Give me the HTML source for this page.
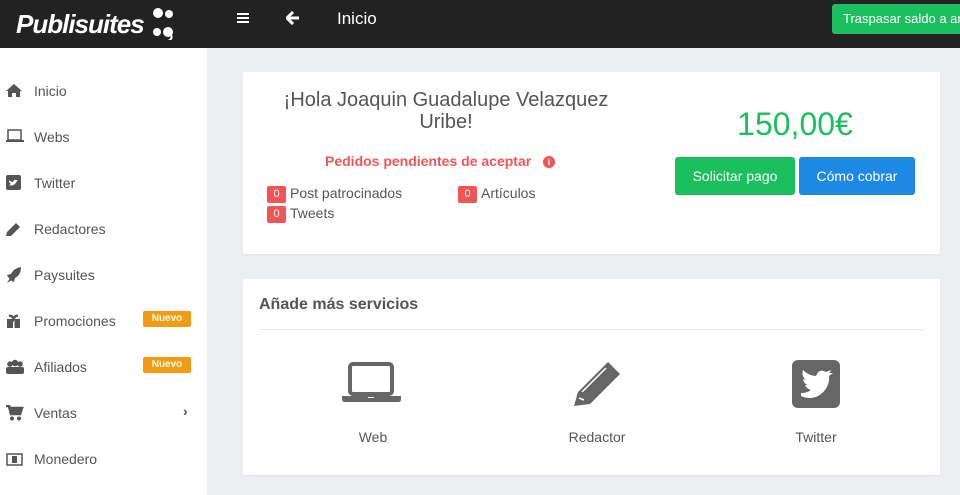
<!DOCTYPE html>
<html><head><meta charset="utf-8"><style>
*{margin:0;padding:0;box-sizing:border-box}
body{width:960px;height:495px;overflow:hidden;background:#eceef2;font-family:"Liberation Sans",Arial,sans-serif;position:relative;color:#555}
.top{position:absolute;left:0;top:0;width:960px;height:48px;background:#222}
.logo{position:absolute;left:16px;top:9px;color:#fff;font:italic bold 26px "Liberation Sans",sans-serif;letter-spacing:-1px}
.side{position:absolute;left:0;top:48px;width:207px;height:447px;background:#fff}
.item{position:absolute;left:0;height:20px;width:207px;font-size:14px;color:#555}
.item svg{position:absolute;left:6px;top:2px}
.item span{position:absolute;left:34px;top:2px}
.nuevo{position:absolute;left:143px;top:0;width:48px;height:16px;background:#f39c12;color:#fff;font-size:10px;font-weight:bold;text-align:center;line-height:16px;border-radius:2px}
.card{position:absolute;background:#fff;box-shadow:0 1px 2px rgba(0,0,0,.06)}
.badge{display:inline-block;width:19px;height:17px;background:#f05656;color:#fff;font-size:11px;text-align:center;line-height:17px;border-radius:2px;margin-right:4px;vertical-align:middle}
.btn{position:absolute;top:157px;height:38px;color:#fff;font-size:14px;text-align:center;line-height:38px;border-radius:3px}
</style></head><body>
<div class="top">
<div class="logo">Publisuites</div>
<svg style="position:absolute;left:148px;top:6px" width="32" height="34" viewBox="0 0 32 34"><circle cx="10" cy="7" r="5" fill="#fff"/><circle cx="21" cy="8" r="4" fill="#fff"/><circle cx="9" cy="26" r="4" fill="#fff"/><circle cx="20" cy="26" r="5" fill="#fff"/><path d="M23 29q2 4-3 6" stroke="#fff" stroke-width="2" fill="none"/></svg>
<div style="position:absolute;left:237px;top:13px;width:12px;height:2px;background:#fff;box-shadow:0 4px 0 #fff,0 8px 0 #fff"></div>
<svg style="position:absolute;left:286px;top:11px" width="14" height="14" viewBox="0 0 14 14"><path d="M7 1L1 7l6 6M1 7h12" stroke="#fff" stroke-width="3" fill="none"/></svg>
<div style="position:absolute;left:337px;top:9px;color:#fff;font-size:17px">Inicio</div>
<div style="position:absolute;left:832px;top:4px;width:128px;height:30px;background:#1cbf5e;color:#fff;font-size:13px;line-height:30px;padding-left:11px;border-radius:3px 0 0 3px;white-space:nowrap;overflow:hidden">Traspasar saldo a anunciante</div>
</div>
<div class="side">
<div class="item" style="top:33px"><svg width="16" height="14"><path d="M8 1L0 8h2v6h4V10h4v4h4V8h2z" fill="#555"/></svg><span>Inicio</span></div>
<div class="item" style="top:79px"><svg width="18" height="14"><rect x="2" y="1" width="13" height="10" fill="none" stroke="#555" stroke-width="1.5"/><rect x="0" y="11" width="18" height="2" fill="#555"/></svg><span>Webs</span></div>
<div class="item" style="top:125px"><svg width="16" height="16"><rect x="0" y="0" width="15" height="15" rx="2" fill="#555"/><path d="M3 10q5 2 8-4l1-1-2 0q-2-1-3 2q-2 0-4-2q0 3 2 4z" fill="#fff"/></svg><span>Twitter</span></div>
<div class="item" style="top:171px"><svg width="16" height="16"><path d="M0 15l1-4 9-9 4 4-9 9z" fill="#555"/></svg><span>Redactores</span></div>
<div class="item" style="top:217px"><svg width="16" height="16"><path d="M15 0Q8 1 5 7L1 8l1 2 4 4 2 1 1-4q6-3 6-11zM4 11l-3 5 5-3z" fill="#555"/></svg><span>Paysuites</span></div>
<div class="item" style="top:263px"><svg width="16" height="16"><rect x="1" y="6" width="13" height="9" fill="#555"/><rect x="7" y="6" width="1.5" height="9" fill="#fff"/><path d="M3 3q3-1 4.5 3q1.5-4 4.5-3" stroke="#555" stroke-width="2.4" fill="none"/></svg><span>Promociones</span><div class="nuevo">Nuevo</div></div>
<div class="item" style="top:309px"><svg width="18" height="16"><circle cx="4" cy="5" r="2.8" fill="#555"/><circle cx="9" cy="4" r="3.2" fill="#555"/><circle cx="14" cy="5" r="2.8" fill="#555"/><rect x="0" y="8" width="18" height="7" rx="2" fill="#555"/></svg><span>Afiliados</span><div class="nuevo">Nuevo</div></div>
<div class="item" style="top:355px"><svg width="18" height="16"><path d="M0 1h3l2 8h9l2-6H4" stroke="#555" stroke-width="2.6" fill="none"/><rect x="5" y="4" width="10" height="5" fill="#555"/><circle cx="6" cy="13.5" r="2" fill="#555"/><circle cx="13" cy="13.5" r="2" fill="#555"/></svg><span>Ventas</span><span style="left:183px;top:0;font-weight:bold">›</span></div>
<div class="item" style="top:401px"><svg width="18" height="16"><rect x="1" y="3" width="15" height="11" fill="none" stroke="#555" stroke-width="1.5"/><rect x="6" y="5" width="5" height="7" fill="#555"/></svg><span>Monedero</span></div>
</div>
<div class="card" style="left:243px;top:72px;width:697px;height:182px">
<div style="position:absolute;left:24px;top:17px;width:358px;text-align:center;font-size:20px;line-height:22px;color:#555">¡Hola Joaquin Guadalupe Velazquez Uribe!</div>
<div style="position:absolute;left:82px;top:81px;color:#f05656;font-size:14px;font-weight:bold">Pedidos pendientes de aceptar <span style="display:inline-block;width:12px;height:12px;border-radius:6px;background:#f05656;color:#fff;font-size:9px;text-align:center;line-height:12px;margin-left:8px;vertical-align:1px">i</span></div>
<div style="position:absolute;left:24px;top:113px;font-size:14px"><span class="badge">0</span>Post patrocinados</div>
<div style="position:absolute;left:215px;top:113px;font-size:14px"><span class="badge">0</span>Artículos</div>
<div style="position:absolute;left:24px;top:133px;font-size:14px"><span class="badge">0</span>Tweets</div>
<div style="position:absolute;left:432px;top:34px;width:240px;text-align:center;font-size:32px;color:#1cbf5e">150,00€</div>
</div>
<div class="btn" style="left:675px;width:120px;background:#1cbf5e">Solicitar pago</div>
<div class="btn" style="left:799px;width:116px;background:#1e88e5">Cómo cobrar</div>
<div class="card" style="left:243px;top:279px;width:697px;height:196px">
<div style="position:absolute;left:16px;top:17px;font-size:16px;font-weight:bold;color:#555">Añade más servicios</div>
<div style="position:absolute;left:16px;top:50px;width:665px;height:1px;background:#e8e8e8"></div>
<svg style="position:absolute;left:98px;top:83px" width="62" height="42" viewBox="0 0 62 42"><rect x="9" y="2" width="42" height="30" rx="3" fill="none" stroke="#666" stroke-width="4"/><path d="M1 34h59v3q0 3-3 3H4q-3 0-3-3z" fill="#666"/><rect x="27" y="35" width="6" height="1" fill="#fff"/></svg>
<svg style="position:absolute;left:329px;top:81px" width="52" height="48" viewBox="0 0 52 48"><path d="M2 46l4-14L36 2l12 12L18 44z" fill="#666"/><path d="M10 32l24-24M7 38l5 2" stroke="#fff" stroke-width="1.5"/></svg>
<svg style="position:absolute;left:549px;top:81px" width="48" height="48" viewBox="0 0 48 48"><rect width="48" height="48" rx="6" fill="#666"/><path d="M9 36q14 6 24-6q5-7 4-14l4-3-4 0q2-2 2-3l-5 2q-7-4-10 4q-7 0-13-6q-2 6 3 10l-3-1q1 5 5 6l-3 0q2 4 6 5q-4 3-10 3z" fill="#fff"/></svg>
<div style="position:absolute;left:100px;top:150px;width:60px;text-align:center;font-size:14px">Web</div>
<div style="position:absolute;left:314px;top:150px;width:80px;text-align:center;font-size:14px">Redactor</div>
<div style="position:absolute;left:533px;top:150px;width:80px;text-align:center;font-size:14px">Twitter</div>
</div>
</body></html>
